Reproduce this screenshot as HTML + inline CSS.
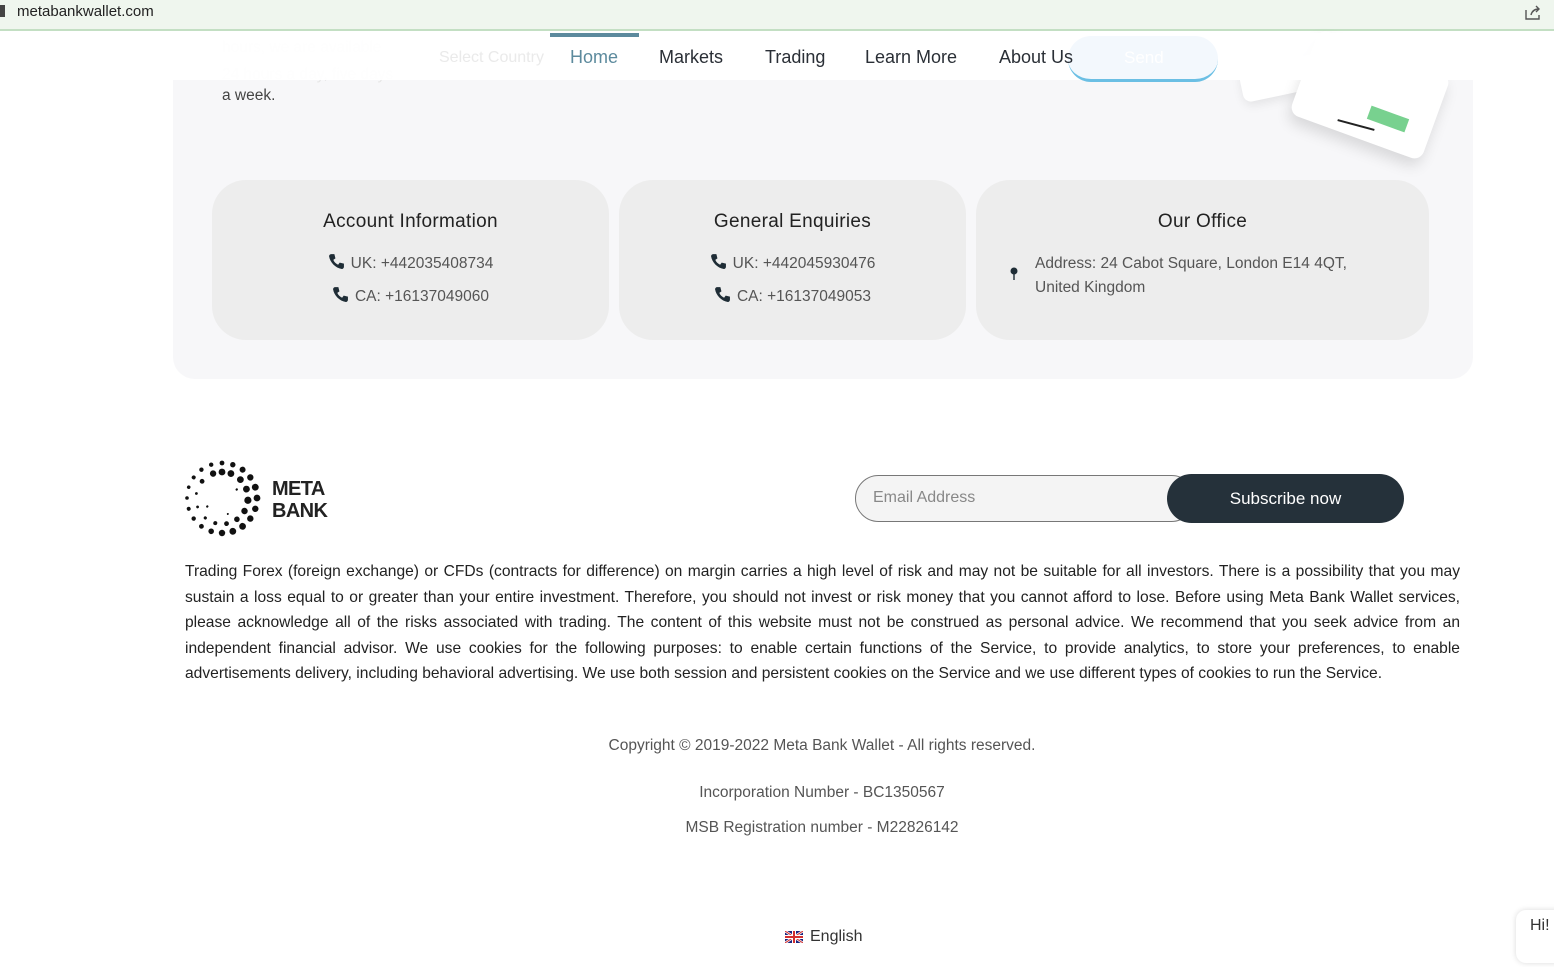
<!DOCTYPE html>
<html><head><meta charset="utf-8"><style>
*{margin:0;padding:0;box-sizing:border-box}
body{width:1554px;height:967px;position:relative;overflow:hidden;background:#fff;font-family:"Liberation Sans",sans-serif}
.a{position:absolute}
.bar{left:0;top:0;width:1554px;height:31px;background:#eff6ee;border-bottom:2px solid #c3dfc3}
.panel{left:173px;top:33px;width:1300px;height:346px;background:#f7f7f9;border-radius:0 0 22px 22px}
.nav{left:0;top:33px;width:1554px;height:47px;background:rgba(255,255,255,.94)}
.navi{top:47px;font-size:18px;color:#2a2f36}
.card{background:#ededed;border-radius:34px;top:180px;height:160px;text-align:center}
.card h3{font-weight:normal;font-size:19px;color:#222;margin-top:31px;letter-spacing:.3px}
.card p{font-size:15.5px;color:#555;margin-top:12px;line-height:20px}
.card h3+p{margin-top:20px}
.ph{display:inline-block;vertical-align:-2px;margin-right:6px}
.disc{left:185px;top:559px;width:1275px;font-size:15.6px;line-height:25.5px;color:#222;text-align:justify}
.c{width:1554px;left:0;text-align:center;font-size:15.5px;color:#555}
</style></head><body>
<div class="a bar"></div>
<div class="a" style="left:0;top:5px;width:5px;height:12px;background:#444"></div>
<div class="a" style="left:17px;top:3px;font-size:15px;color:#222">metabankwallet.com</div>
<svg class="a" style="left:1524px;top:5px" width="18" height="16" viewBox="0 0 18 16"><path d="M2 5v9h13v-4M7 10c1-4 4-6 8-6M12 1l3 3-3 3" fill="none" stroke="#555" stroke-width="1.4"/></svg>
<div class="a panel"></div>
<div class="a" style="left:222px;top:87px;font-size:15.5px;color:#444">a week.</div>
<div class="a" style="left:222px;top:34px;font-size:15.5px;color:#e6e6e6;line-height:27px">hours, we are available<br>24 hours a day, five days</div>
<div class="a" style="left:1240px;top:58px;width:110px;height:34px;background:#fff;border-radius:8px;transform:rotate(-12deg);box-shadow:0 4px 10px rgba(0,0,0,.08)"></div>
<div class="a" style="left:1300px;top:50px;width:140px;height:90px;background:#fff;border-radius:10px;transform:rotate(20deg);box-shadow:0 8px 14px rgba(0,0,0,.12)"></div>
<div class="a" style="left:1368px;top:112px;width:40px;height:14px;background:#78d18f;transform:rotate(20deg)"></div>
<div class="a" style="left:1337px;top:124px;width:38px;height:2px;background:#222;transform:rotate(15deg)"></div>
<div class="a nav"></div>
<div class="a" style="left:550px;top:33px;width:89px;height:4px;background:#5c8a9d"></div>
<div class="a" style="left:1068px;top:36px;width:150px;height:46px;border-radius:23px;background:#f3f8fd;border-bottom:3px solid #6bbfe4"></div>
<div class="a" style="left:1124px;top:48px;font-size:17px;color:#fff">Send</div>
<div class="a navi" style="left:439px;top:49px;font-size:16px;color:#eaeaea">Select Country</div>
<div class="a navi" style="left:570px;color:#5c8a9d">Home</div>
<div class="a navi" style="left:659px">Markets</div>
<div class="a navi" style="left:765px">Trading</div>
<div class="a navi" style="left:865px">Learn More</div>
<div class="a navi" style="left:999px">About Us</div>

<svg width="0" height="0" style="position:absolute"><defs><symbol id="ph" viewBox="0 0 16 16"><path d="M3 1l3 0 1 4-2 1.5c1 2.2 2.3 3.5 4.5 4.5L11 9l4 1v3c0 1-1 2-2 2C7 14 2 9 1 3c0-1 1-2 2-2z" fill="#1f2d36"/></symbol></defs></svg>
<div class="a card" style="left:212px;width:397px"><h3>Account Information</h3>
<p><svg class="ph" width="17" height="17"><use href="#ph"/></svg>UK: +442035408734</p>
<p><svg class="ph" width="17" height="17"><use href="#ph"/></svg>CA: +16137049060</p></div>
<div class="a card" style="left:619px;width:347px"><h3>General Enquiries</h3>
<p><svg class="ph" width="17" height="17"><use href="#ph"/></svg>UK: +442045930476</p>
<p><svg class="ph" width="17" height="17"><use href="#ph"/></svg>CA: +16137049053</p></div>
<div class="a card" style="left:976px;width:453px"><h3>Our Office</h3></div>
<svg class="a" style="left:1009px;top:266px" width="10" height="16" viewBox="0 0 10 16"><circle cx="5" cy="5" r="3.5" fill="#1f2d36"/><path d="M4.3 8h1.4v6H4.3z" fill="#1f2d36"/></svg>
<div class="a" style="left:1035px;top:252px;font-size:15.5px;color:#555;line-height:24px">Address: 24 Cabot Square, London E14 4QT,<br>United Kingdom</div>

<svg class="a" style="left:182px;top:458px" width="80" height="80" viewBox="-40 -40 80 80" fill="#111">
<g><circle cx="0" cy="-35" r="2.4"/><circle cx="0" cy="-35" r="2.7" transform="rotate(18)"/><circle cx="0" cy="-35" r="3" transform="rotate(36)"/><circle cx="0" cy="-35" r="3.2" transform="rotate(54)"/><circle cx="0" cy="-35" r="3.4" transform="rotate(72)"/><circle cx="0" cy="-35" r="3.4" transform="rotate(90)"/><circle cx="0" cy="-35" r="3.2" transform="rotate(108)"/><circle cx="0" cy="-35" r="3.2" transform="rotate(126)"/><circle cx="0" cy="-35" r="3.4" transform="rotate(144)"/><circle cx="0" cy="-35" r="3.4" transform="rotate(162)"/><circle cx="0" cy="-35" r="3.2" transform="rotate(180)"/><circle cx="0" cy="-35" r="2.8" transform="rotate(198)"/><circle cx="0" cy="-35" r="2.4" transform="rotate(216)"/><circle cx="0" cy="-35" r="2.2" transform="rotate(234)"/><circle cx="0" cy="-35" r="2" transform="rotate(252)"/><circle cx="0" cy="-35" r="1.8" transform="rotate(270)"/><circle cx="0" cy="-35" r="1.8" transform="rotate(288)"/><circle cx="0" cy="-35" r="2" transform="rotate(306)"/><circle cx="0" cy="-35" r="2.2" transform="rotate(324)"/><circle cx="0" cy="-35" r="2.2" transform="rotate(342)"/></g>
<g><circle cx="0" cy="-26" r="3.2" transform="rotate(-20)"/><circle cx="0" cy="-26" r="3.4" transform="rotate(0)"/><circle cx="0" cy="-26" r="3.4" transform="rotate(20)"/><circle cx="0" cy="-26" r="3.4" transform="rotate(45)"/><circle cx="0" cy="-26" r="3.4" transform="rotate(70)"/><circle cx="0" cy="-26" r="3.6" transform="rotate(95)"/><circle cx="0" cy="-26" r="3.2" transform="rotate(120)"/><circle cx="0" cy="-26" r="2.8" transform="rotate(145)"/><circle cx="0" cy="-26" r="2.4" transform="rotate(170)"/><circle cx="0" cy="-26" r="2" transform="rotate(195)"/><circle cx="0" cy="-26" r="1.6" transform="rotate(220)"/><circle cx="0" cy="-26" r="1.4" transform="rotate(250)"/><circle cx="0" cy="-26" r="1.4" transform="rotate(280)"/><circle cx="0" cy="-26" r="2.4" transform="rotate(310)"/><circle cx="0" cy="-17" r="1.2" transform="rotate(60)"/><circle cx="0" cy="-17" r="1.2" transform="rotate(240)"/><circle cx="0" cy="-17" r="1" transform="rotate(160)"/></g>
</svg>
<div class="a" style="left:272px;top:478px;font-size:20px;font-weight:bold;color:#222;line-height:22px;letter-spacing:-.6px">META<br>BANK</div>

<div class="a" style="left:855px;top:475px;width:340px;height:47px;border:1px solid #777;border-radius:24px;background:#f4f4f4"></div>
<div class="a" style="left:873px;top:489px;font-size:16px;color:#888">Email Address</div>
<div class="a" style="left:1167px;top:474px;width:237px;height:49px;border-radius:25px;background:#25313a;color:#fff;font-size:17px;text-align:center;line-height:49px">Subscribe now</div>

<div class="a disc">Trading Forex (foreign exchange) or CFDs (contracts for difference) on margin carries a high level of risk and may not be suitable for all investors. There is a possibility that you may sustain a loss equal to or greater than your entire investment. Therefore, you should not invest or risk money that you cannot afford to lose. Before using Meta Bank Wallet services, please acknowledge all of the risks associated with trading. The content of this website must not be construed as personal advice. We recommend that you seek advice from an independent financial advisor. We use cookies for the following purposes: to enable certain functions of the Service, to provide analytics, to store your preferences, to enable advertisements delivery, including behavioral advertising. We use both session and persistent cookies on the Service and we use different types of cookies to run the Service.</div>

<div class="a c" style="top:737px;left:45px">Copyright © 2019-2022 Meta Bank Wallet - All rights reserved.</div>
<div class="a c" style="top:784px;left:45px">Incorporation Number - BC1350567</div>
<div class="a c" style="top:819px;left:45px">MSB Registration number - M22826142</div>

<svg class="a" style="left:785px;top:931px" width="18" height="12" viewBox="0 0 18 12"><rect width="18" height="12" fill="#1a237e"/><path d="M0 0L18 12M18 0L0 12" stroke="#fff" stroke-width="2.5"/><path d="M0 0L18 12M18 0L0 12" stroke="#d32f2f" stroke-width="1"/><path d="M9 0v12M0 6h18" stroke="#fff" stroke-width="4"/><path d="M9 0v12M0 6h18" stroke="#d32f2f" stroke-width="2"/></svg>
<div class="a" style="left:810px;top:928px;font-size:16px;color:#333">English</div>
<div class="a" style="left:1516px;top:910px;width:50px;height:53px;background:#fff;border-radius:10px;box-shadow:0 0 6px rgba(0,0,0,.15)"></div>
<div class="a" style="left:1530px;top:917px;font-size:16px;color:#333">Hi!</div>
</body></html>
